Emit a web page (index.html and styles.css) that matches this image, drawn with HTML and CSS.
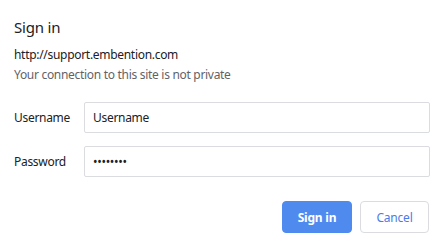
FILE: index.html
```html
<!DOCTYPE html>
<html>
<head>
<meta charset="utf-8">
<link rel="stylesheet" href="styles.css">
</head>
<body>
<div class="dialog">
  <h1 class="title">Sign in</h1>
  <div class="origin">http://support.embention.com</div>
  <div class="note">Your connection to this site is not private</div>
  <form class="fields">
    <label class="row">
      <span class="label">Username</span>
      <input class="input" type="text" value="Username">
    </label>
    <label class="row">
      <span class="label">Password</span>
      <input class="input" type="password" value="password">
    </label>
  </form>
  <div class="actions">
    <button class="btn primary" type="button">Sign in</button>
    <button class="btn secondary" type="button">Cancel</button>
  </div>
</div>
</body>
</html>
```

FILE: styles.css
```css
html, body {
  margin: 0;
  padding: 0;
  background: #ffffff;
}
body {
  width: 444px;
  height: 249px;
  overflow: hidden;
  font-family: "Noto Sans", "Segoe UI", sans-serif;
  color: #202124;
  letter-spacing: -0.3px;
}
.dialog {
  padding: 17px 14px 0 14px;
}
.title {
  margin: 0;
  font-size: 15px;
  font-weight: 400;
  line-height: 20px;
  color: #202124;
  letter-spacing: -0.2px;
}
.origin {
  margin-top: 8px;
  font-size: 12px;
  line-height: 20px;
  color: #202124;
}
.note {
  font-size: 12px;
  line-height: 20px;
  color: #5f6368;
}
.fields {
  margin-top: 17px;
  display: flex;
  flex-direction: column;
  gap: 13px;
}
.row {
  display: flex;
  align-items: center;
}
.label {
  width: 70px;
  font-size: 12px;
  color: #202124;
}
.input {
  flex: 1;
  box-sizing: border-box;
  height: 31px;
  margin: 0;
  padding: 0 8px;
  border: 1px solid #dadce0;
  border-radius: 2px;
  font-family: "Noto Sans", "Segoe UI", sans-serif;
  font-size: 12px;
  letter-spacing: -0.3px;
  color: #202124;
  background: #fff;
  outline: none;
}
.actions {
  margin-top: 24px;
  display: flex;
  justify-content: flex-end;
  gap: 8px;
  padding-right: 1px;
}
.btn {
  box-sizing: border-box;
  height: 32px;
  border-radius: 4px;
  font-family: "Noto Sans", "Segoe UI", sans-serif;
  font-size: 12px;
  letter-spacing: -0.2px;
  padding: 0;
  cursor: pointer;
}
.primary {
  width: 70px;
  background: #4f8aef;
  border: 1px solid #4f8aef;
  color: #ffffff;
  font-weight: 700;
}
.secondary {
  width: 69px;
  background: #ffffff;
  border: 1px solid #dadce0;
  color: #4a7de6;
  font-weight: 400;
}
```
